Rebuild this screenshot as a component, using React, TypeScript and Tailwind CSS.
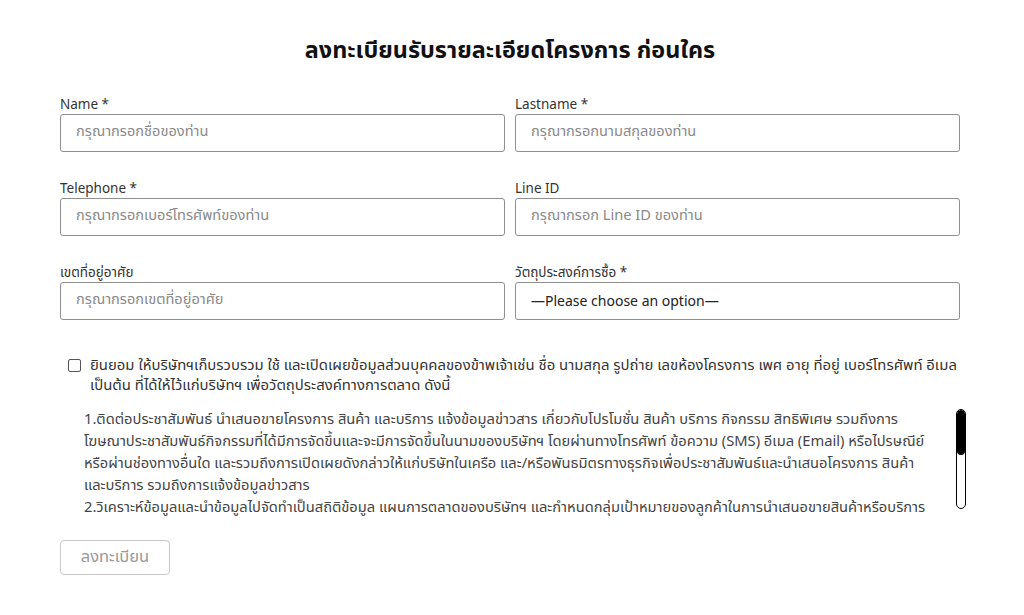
import React from "react";

const font = { fontFamily: '"Noto Sans Thai", "Noto Sans", "Liberation Sans", sans-serif' };

function Field({ label, placeholder, select }: { label: string; placeholder: string; select?: boolean }) {
  return (
    <div className="flex flex-col">
      <div className="h-[18px] text-[13.5px] leading-[18px] text-[#333] mb-[0px]">{label}</div>
      <div className="h-[38px] border border-[#8f8f8f] rounded-[3px] flex items-center px-[15px] bg-white">
        <span className={select ? "text-[#222] text-[14px]" : "text-[#8a8a8a] text-[14.6px]"}>{placeholder}</span>
      </div>
    </div>
  );
}

const lines = [
  "1.ติดต่อประชาสัมพันธ์ นำเสนอขายโครงการ สินค้า และบริการ แจ้งข้อมูลข่าวสาร เกี่ยวกับโปรโมชั่น สินค้า บริการ กิจกรรม สิทธิพิเศษ รวมถึงการ",
  "โฆษณาประชาสัมพันธ์กิจกรรมที่ได้มีการจัดขึ้นและจะมีการจัดขึ้นในนามของบริษัทฯ โดยผ่านทางโทรศัพท์ ข้อความ (SMS) อีเมล (Email) หรือไปรษณีย์",
  "หรือผ่านช่องทางอื่นใด และรวมถึงการเปิดเผยดังกล่าวให้แก่บริษัทในเครือ และ/หรือพันธมิตรทางธุรกิจเพื่อประชาสัมพันธ์และนำเสนอโครงการ สินค้า",
  "และบริการ รวมถึงการแจ้งข้อมูลข่าวสาร",
  "2.วิเคราะห์ข้อมูลและนำข้อมูลไปจัดทำเป็นสถิติข้อมูล แผนการตลาดของบริษัทฯ และกำหนดกลุ่มเป้าหมายของลูกค้าในการนำเสนอขายสินค้าหรือบริการ",
];

export default function App() {
  return (
    <div className="w-[1024px] h-[615px] bg-white overflow-hidden" style={font}>
      <div className="w-[900px] ml-[60px] pt-[35px]">
        <h1 className="text-center text-[23.4px] leading-[32px] font-bold text-[#111] mb-[29px]">
          ลงทะเบียนรับรายละเอียดโครงการ ก่อนใคร
        </h1>
        <div className="grid grid-cols-2 gap-x-[10px] gap-y-[28px]">
          <Field label="Name *" placeholder="กรุณากรอกชื่อของท่าน" />
          <Field label="Lastname *" placeholder="กรุณากรอกนามสกุลของท่าน" />
          <Field label="Telephone *" placeholder="กรุณากรอกเบอร์โทรศัพท์ของท่าน" />
          <Field label="Line ID" placeholder="กรุณากรอก Line ID ของท่าน" />
          <Field label="เขตที่อยู่อาศัย" placeholder="กรุณากรอกเขตที่อยู่อาศัย" />
          <Field label="วัตถุประสงค์การซื้อ *" placeholder="—Please choose an option—" select />
        </div>
        <div className="flex items-start mt-[36px] pl-[8px]">
          <div className="w-[13px] h-[13px] border border-[#555] rounded-[2px] mt-[3px] shrink-0" />
          <div className="ml-[9px] text-[14.9px] leading-[20px] text-[#333] whitespace-nowrap">
            ยินยอม ให้บริษัทฯเก็บรวบรวม ใช้ และเปิดเผยข้อมูลส่วนบุคคลของข้าพเจ้าเช่น ชื่อ นามสกุล รูปถ่าย เลขห้องโครงการ เพศ อายุ ที่อยู่ เบอร์โทรศัพท์ อีเมล
            <br />
            เป็นต้น ที่ได้ให้ไว้แก่บริษัทฯ เพื่อวัตถุประสงค์ทางการตลาด ดังนี้
          </div>
        </div>
        <div className="flex mt-[13px] ml-[24px] w-[882px]">
          <div className="flex-1 h-[110px] overflow-hidden text-[14.7px] leading-[22px] text-[#444]">
            {lines.map((l, i) => (
              <div key={i} className="whitespace-nowrap">{l}</div>
            ))}
          </div>
          <div className="w-[10px] h-[100px] mt-[0px] border border-black rounded-full overflow-hidden flex flex-col shrink-0">
            <div className="h-[45px] bg-black rounded-full" />
          </div>
        </div>
        <button className="mt-[21px] w-[110px] h-[35px] border border-[#c8c8c8] rounded-[4px] text-[16.5px] text-[#999] bg-white" style={font}>
          ลงทะเบียน
        </button>
      </div>
    </div>
  );
}
